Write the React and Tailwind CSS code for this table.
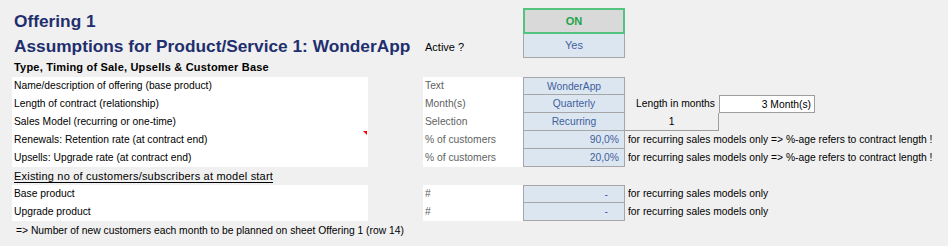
import React from "react";

// Spreadsheet-style assumptions block for one product offering.

const RECURRING_NOTE = "for recurring sales models only => %-age refers to contract length !";

function LabelCell({ children, flag }) {
  return (
    <div className="relative w-[356px] h-full bg-white pl-[2px] whitespace-nowrap text-black">
      {children}
      {flag && (
        <span className="absolute right-[1px] top-0 w-0 h-0 border-t-[4px] border-l-[4px] border-t-[#ff0000] border-l-transparent" />
      )}
    </div>
  );
}

function UnitCell({ children }) {
  return (
    <div className="w-[100px] h-full bg-white pl-[2px] text-[#5f5f5f] whitespace-nowrap">{children}</div>
  );
}

function InputCell({ children, first, align = "center" }) {
  const alignCls =
    align === "right" ? "text-right pr-[5px]" : align === "dash" ? "text-right pr-[16px]" : "text-center";
  return (
    <div
      className={
        "w-[102px] h-full bg-[#dce6f1] border-x border-b border-[#a6a6a6] text-[#41619c] whitespace-nowrap " +
        (first ? "border-t " : "") +
        alignCls
      }
    >
      {children}
    </div>
  );
}

function Row({ children }) {
  return <div className="flex h-[18px] leading-[17px] text-[10.3px]">{children}</div>;
}

export default function App() {
  return (
    <div className="min-h-screen w-full bg-[#f0f0f0] font-['Liberation_Sans',Arial,sans-serif] pl-[12px] pt-[8px] overflow-hidden">
      {/* Title + on/off switch */}
      <div className="flex h-[26px]">
        <div className="w-[511px] pl-[2px] text-[17.3px] leading-[26px] font-bold text-[#1f2f6e] whitespace-nowrap">
          Offering 1
        </div>
        <div className="w-[102px] h-[26px] bg-[#d9d9d9] border-2 border-[#52c47d] flex items-center justify-center text-[11px] font-bold text-[#1fa34a]">
          ON
        </div>
      </div>

      <div className="flex h-[24px]">
        <div className="w-[411px] pl-[2px] text-[17.3px] leading-[24px] font-bold text-[#1f2f6e] whitespace-nowrap">
          Assumptions for Product/Service 1: WonderApp
        </div>
        <div className="w-[100px] pl-[2px] text-[11px] leading-[26px] text-black">Active ?</div>
        <div className="w-[102px] h-[24px] bg-[#dce6f1] border-x border-b border-[#a6a6a6] flex items-center justify-center text-[11px] text-[#41619c]">
          Yes
        </div>
      </div>

      <div className="h-[19px] pl-[2px] text-[11px] tracking-[0.2px] leading-[19px] font-bold text-black whitespace-nowrap">
        Type, Timing of Sale, Upsells &amp; Customer Base
      </div>

      {/* Type / timing rows */}
      <Row>
        <LabelCell>Name/description of offering (base product)</LabelCell>
        <div className="w-[55px]" />
        <UnitCell>Text</UnitCell>
        <InputCell first>WonderApp</InputCell>
      </Row>
      <Row>
        <LabelCell>Length of contract (relationship)</LabelCell>
        <div className="w-[55px]" />
        <UnitCell>Month(s)</UnitCell>
        <InputCell>Quarterly</InputCell>
        <div className="w-[94px] text-right pr-[4px] text-black whitespace-nowrap">Length in months</div>
        <div className="w-[96px] h-[18px] bg-white border border-[#9e9e9e] text-right pr-[3px] text-black">
          3 Month(s)
        </div>
      </Row>
      <Row>
        <LabelCell>Sales Model (recurring or one-time)</LabelCell>
        <div className="w-[55px]" />
        <UnitCell>Selection</UnitCell>
        <InputCell>Recurring</InputCell>
        <div className="w-[94px] h-full border-r border-b border-[#9e9e9e] text-center text-black">1</div>
      </Row>
      <Row>
        <LabelCell flag>Renewals: Retention rate (at contract end)</LabelCell>
        <div className="w-[55px]" />
        <UnitCell>% of customers</UnitCell>
        <InputCell align="right">90,0%</InputCell>
        <div className="pl-[3px] text-black whitespace-nowrap">{RECURRING_NOTE}</div>
      </Row>
      <Row>
        <LabelCell>Upsells: Upgrade rate (at contract end)</LabelCell>
        <div className="w-[55px]" />
        <UnitCell>% of customers</UnitCell>
        <InputCell align="right">20,0%</InputCell>
        <div className="pl-[3px] text-black whitespace-nowrap">{RECURRING_NOTE}</div>
      </Row>

      {/* Existing customer base */}
      <div className="h-[18px] pl-[2px] text-[11px] tracking-[0.2px] leading-[19px] text-black underline underline-offset-[2px] whitespace-nowrap">
        Existing no of customers/subscribers at model start
      </div>
      <Row>
        <LabelCell>Base product</LabelCell>
        <div className="w-[55px]" />
        <UnitCell>#</UnitCell>
        <InputCell first align="dash">-</InputCell>
        <div className="pl-[3px] text-black whitespace-nowrap">for recurring sales models only</div>
      </Row>
      <Row>
        <LabelCell>Upgrade product</LabelCell>
        <div className="w-[55px]" />
        <UnitCell>#</UnitCell>
        <InputCell align="dash">-</InputCell>
        <div className="pl-[3px] text-black whitespace-nowrap">for recurring sales models only</div>
      </Row>
      <div className="h-[18px] pl-[4px] text-[10.3px] leading-[19px] text-black whitespace-nowrap">
        =&gt; Number of new customers each month to be planned on sheet Offering 1 (row 14)
      </div>
    </div>
  );
}
